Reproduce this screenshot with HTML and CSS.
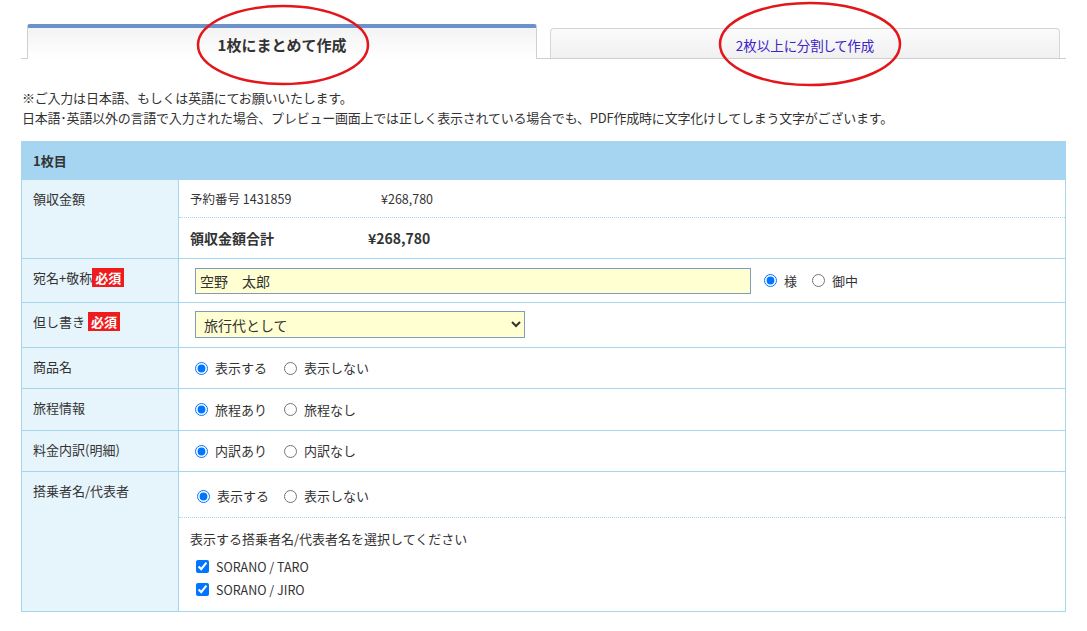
FILE: index.html
```html
<!DOCTYPE html>
<html lang="ja">
<head>
<meta charset="utf-8">
<link rel="stylesheet" href="styles.css">
</head>
<body>
<div class="page">
  <div class="tabs">
    <div class="tab tab-active">1枚にまとめて作成</div>
    <div class="tab tab-inactive"><a href="#">2枚以上に分割して作成</a></div>
  </div>

  <div class="notes">
    <p>※ご入力は日本語、もしくは英語にてお願いいたします。</p>
    <p>日本語･英語以外の言語で入力された場合、プレビュー画面上では正しく表示されている場合でも、PDF作成時に文字化けしてしまう文字がございます。</p>
  </div>

  <div class="form">
    <div class="form-head">1枚目</div>

    <div class="row row-amount">
      <div class="label">領収金額</div>
      <div class="value value-stack">
        <div class="sub sub-line">
          <span class="amt-name">予約番号 1431859</span>
          <span class="amt-val">¥268,780</span>
        </div>
        <div class="sub total">
          <span class="total-name">領収金額合計</span>
          <span class="total-val">¥268,780</span>
        </div>
      </div>
    </div>

    <div class="row row-name">
      <div class="label">宛名+敬称<span class="req">必須</span></div>
      <div class="value value-inline">
        <input class="text-input" type="text" value="空野　太郎">
        <label class="opt"><input type="radio" name="hon" checked>様</label>
        <label class="opt"><input type="radio" name="hon">御中</label>
      </div>
    </div>

    <div class="row row-note">
      <div class="label">但し書き <span class="req">必須</span></div>
      <div class="value value-inline">
        <select class="select"><option>旅行代として</option></select>
      </div>
    </div>

    <div class="row row-r41">
      <div class="label">商品名</div>
      <div class="value value-radio">
        <label class="opt"><input type="radio" name="p" checked>表示する</label>
        <label class="opt"><input type="radio" name="p">表示しない</label>
      </div>
    </div>

    <div class="row row-r42">
      <div class="label">旅程情報</div>
      <div class="value value-radio">
        <label class="opt"><input type="radio" name="i" checked>旅程あり</label>
        <label class="opt"><input type="radio" name="i">旅程なし</label>
      </div>
    </div>

    <div class="row row-r41">
      <div class="label">料金内訳(明細)</div>
      <div class="value value-radio">
        <label class="opt"><input type="radio" name="f" checked>内訳あり</label>
        <label class="opt"><input type="radio" name="f">内訳なし</label>
      </div>
    </div>

    <div class="row row-pax">
      <div class="label">搭乗者名/代表者</div>
      <div class="value value-stack">
        <div class="sub pax-radios">
          <label class="opt"><input type="radio" name="x" checked>表示する</label>
          <label class="opt"><input type="radio" name="x">表示しない</label>
        </div>
        <div class="sub pax-list">
          <p class="pax-title">表示する搭乗者名/代表者名を選択してください</p>
          <label class="chk"><input type="checkbox" checked>SORANO / TARO</label>
          <label class="chk"><input type="checkbox" checked>SORANO / JIRO</label>
        </div>
      </div>
    </div>
  </div>

  <svg class="marks" width="1087" height="100" viewBox="0 0 1087 100">
    <ellipse cx="283" cy="45" rx="85" ry="39" fill="none" stroke="#e3161b" stroke-width="2.5"/>
    <ellipse cx="810" cy="44" rx="90" ry="41" fill="none" stroke="#e3161b" stroke-width="2.5"/>
  </svg>
</div>
</body>
</html>
```

FILE: styles.css
```css
* { box-sizing: border-box; }
html, body { margin: 0; padding: 0; background: #fff; }
body {
  font-family: "Noto Sans CJK JP", "Noto Sans", sans-serif;
  font-size: 13px;
  color: #333;
}
.page { position: relative; width: 1087px; height: 631px; overflow: hidden; }
p { margin: 0; }

.tabs {
  margin-left: 21px;
  width: 1045px;
  height: 59px;
  border-bottom: 1px solid #cfcfcf;
  display: flex;
  align-items: flex-end;
  padding-left: 6px;
  gap: 13px;
}
.tab {
  width: 510px;
  display: flex;
  align-items: center;
  justify-content: center;
  margin-bottom: -1px;
}
.tab-active {
  height: 35px;
  border-top: 4px solid #6b92c9;
  border-left: 1px solid #cfcfcf;
  border-right: 1px solid #cfcfcf;
  border-radius: 3px 3px 0 0;
  background: linear-gradient(#f3f3f3, #ffffff);
  font-size: 15px;
  font-weight: bold;
  color: #333;
  padding-top: 2px;
}
.tab-inactive {
  height: 30px;
  border: 1px solid #d6d6d6;
  border-bottom: none;
  border-radius: 4px 4px 0 0;
  background: linear-gradient(#fbfbfb, #f0f0f0);
  margin-bottom: 0;
}
.tab-inactive a {
  color: #3b23c9;
  text-decoration: none;
  font-size: 13.5px;
  padding-top: 2px;
  font-feature-settings: "palt";
}

.notes {
  margin: 29px 0 0 22px;
  line-height: 20px;
}
.notes p { letter-spacing: -0.22px; }

.form {
  margin: 13px 0 0 21px;
  width: 1045px;
  border: 1px solid #a6d5ee;
  border-top: none;
}
.form-head {
  height: 38px;
  background: #a5d5f1;
  font-weight: bold;
  padding-left: 11px;
  display: flex;
  align-items: center;
}
.row {
  display: flex;
  border-top: 1px solid #a6d5ee;
}
.label {
  width: 157px;
  flex: none;
  background: #e6f4fb;
  border-right: 1px solid #a6d5ee;
  padding: 9px 11px;
  line-height: 20px;
}
.value { flex: 1; min-width: 0; }
.value-inline, .value-radio {
  display: flex;
  align-items: center;
  padding-left: 16px;
}
.value-radio { padding-left: 11px; }

.row-amount { height: 79px; }
.row-name { height: 44px; }
.row-note { height: 45px; }
.row-r41 { height: 41px; }
.row-r42 { height: 42px; }
.row-pax { height: 140px; }

.value-stack { display: flex; flex-direction: column; }
.sub { padding-left: 11px; }
.sub-line {
  height: 38px;
  display: flex;
  align-items: center;
  border-bottom: 1px dotted #a6d5ee;
  font-size: 12.5px;
}
.amt-name { width: 191px; }
.total {
  flex: 1;
  display: flex;
  align-items: center;
  font-size: 14px;
  font-weight: bold;
  padding-bottom: 1px;
}
.total-name { width: 178px; }

.req {
  display: inline-block;
  background: #ee1c1c;
  color: #fff;
  font-weight: bold;
  padding: 0 3px;
  line-height: 19px;
  font-size: 13px;
}

.text-input {
  width: 556px;
  height: 26px;
  border: 1px solid #7f9db9;
  background: #ffffd2;
  font-family: inherit;
  font-size: 14px;
  color: #333;
  padding: 0 4px;
  margin: 0 8px 0 0;
}
.select {
  width: 330px;
  height: 27px;
  border: 1px solid #7f9db9;
  border-radius: 0;
  background-color: #ffffd2;
  font-family: inherit;
  font-size: 14px;
  color: #333;
  padding: 0 4px;
  margin: 0 0 1px 0;
}

.opt {
  display: inline-flex;
  align-items: center;
  margin-right: 10px;
  line-height: 20px;
}
.opt input {
  margin: 0 7px 0 5px;
  width: 13px;
  height: 13px;
}
.value-radio .opt { margin-right: 12px; }

.pax-radios {
  height: 46px;
  display: flex;
  align-items: center;
  padding-left: 13px;
  padding-top: 3px;
  border-bottom: 1px dotted #a6d5ee;
}
.pax-list { padding-top: 11px; }
.pax-title { line-height: 20px; margin-bottom: 6px; }
.chk {
  display: flex;
  align-items: center;
  height: 23px;
  font-size: 12.5px;
  padding-left: 6px;
}
.chk input { margin: 0 7px 0 0; width: 13px; height: 13px; }

.marks { position: absolute; left: 0; top: 0; pointer-events: none; }
```
